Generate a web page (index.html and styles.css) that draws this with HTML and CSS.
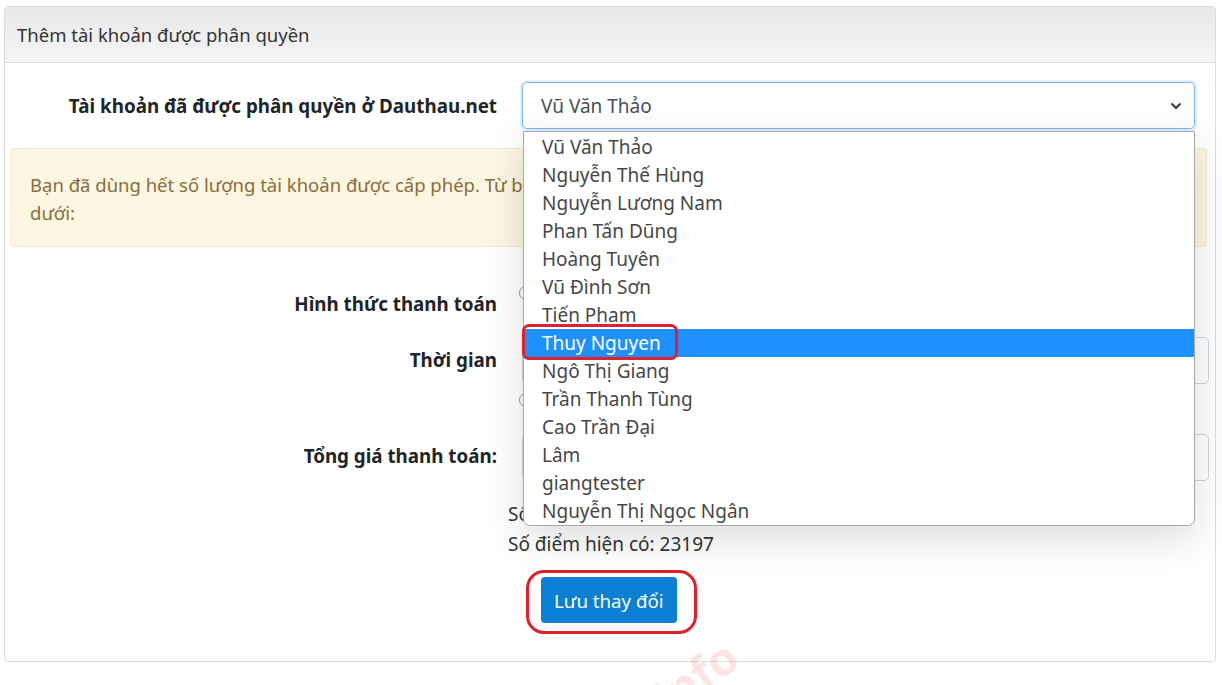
FILE: index.html
```html
<!DOCTYPE html>
<html lang="vi">
<head>
<meta charset="utf-8">
<title>Thêm tài khoản được phân quyền</title>
<link rel="stylesheet" href="styles.css">
</head>
<body>
<div class="card">
  <div class="card-header">Thêm tài khoản được phân quyền</div>
  <div class="card-body">
    <div class="row row-account">
      <div class="label">Tài khoản đã được phân quyền ở Dauthau.net</div>
      <div class="control">
        <div class="select-wrap">
          <div class="select">
            <span>Vũ Văn Thảo</span>
            <svg class="chev" width="12" height="8" viewBox="0 0 12 8"><path d="M1.5 1.5 L6 6 L10.5 1.5" fill="none" stroke="#343a40" stroke-width="2"/></svg>
          </div>
          <ul class="dropdown">
            <li>Vũ Văn Thảo</li>
            <li>Nguyễn Thế Hùng</li>
            <li>Nguyễn Lương Nam</li>
            <li>Phan Tấn Dũng</li>
            <li>Hoàng Tuyên</li>
            <li>Vũ Đình Sơn</li>
            <li>Tiến Pham</li>
            <li class="active"><span class="mark">Thuy Nguyen</span></li>
            <li>Ngô Thị Giang</li>
            <li>Trần Thanh Tùng</li>
            <li>Cao Trần Đại</li>
            <li>Lâm</li>
            <li>giangtester</li>
            <li>Nguyễn Thị Ngọc Ngân</li>
          </ul>
        </div>
      </div>
    </div>

    <div class="alert">Bạn đã dùng hết số lượng tài khoản được cấp phép. Từ bây giờ, để thêm tài khoản bạn cần thanh toán theo hình thức bên<br>dưới:</div>

    <div class="row row-pay">
      <div class="label">Hình thức thanh toán</div>
      <div class="control">
        <label class="radio"><span class="dot"></span>Thanh toán bằng điểm</label>
      </div>
    </div>

    <div class="row row-time">
      <div class="label">Thời gian</div>
      <div class="control">
        <div class="input">12 tháng</div>
        <label class="radio"><span class="dot"></span>Theo thời hạn gói VIP</label>
      </div>
    </div>

    <div class="row row-total">
      <div class="label">Tổng giá thanh toán:</div>
      <div class="control">
        <div class="input">0</div>
      </div>
    </div>

    <div class="info">
      <p>Số điểm cần thanh toán: 0</p>
      <p>Số điểm hiện có: 23197</p>
    </div>

    <div class="actions">
      <span class="btn-mark"><button class="btn">Lưu thay đổi</button></span>
    </div>
  </div>
</div>
<div class="watermark">info</div>
</body>
</html>
```

FILE: styles.css
```css
* { box-sizing: border-box; }
html, body { margin: 0; padding: 0; overflow: hidden; }
body {
  background: #fff;
  font-family: "Noto Sans", "Open Sans", sans-serif;
  color: #212529;
  padding: 6px 6px 0 4px;
  height: 685px;
  position: relative;
}
.card {
  border: 1px solid #dcdcdc;
  border-radius: 4px;
  background: #fff;
  height: 656px;
}
.card-header {
  height: 56px;
  padding: 0 12px;
  display: flex;
  align-items: center;
  font-size: 18.5px;
  color: #333;
  background: linear-gradient(#e8e8e8, #f5f5f5);
  border-bottom: 1px solid #dcdcdc;
  border-radius: 4px 4px 0 0;
}
.card-body { padding: 19px 8px 0 0; }
.row {
  display: grid;
  grid-template-columns: 505px 1fr;
  column-gap: 12px;
}
.label {
  font-weight: 700;
  font-size: 18.8px;
  text-align: right;
  padding-right: 13px;
  color: #212529;
}
.row-account { align-items: center; }
.select-wrap { position: relative; width: 673px; }
.select {
  height: 47px;
  border: 1px solid #80b5e6;
  border-radius: 5px;
  box-shadow: 0 0 0 2px rgba(0, 123, 255, 0.12);
  display: flex;
  align-items: center;
  justify-content: space-between;
  padding: 0 12px 0 18px;
  font-size: 19px;
  color: #495057;
}
.dropdown {
  position: absolute;
  top: 49px;
  left: 1px;
  right: 0;
  margin: 0;
  padding: 1px 0 0;
  list-style: none;
  background: #fff;
  border: 1px solid #a9a9a9;
  border-radius: 0 0 7px 7px;
  box-shadow: 0 12px 40px rgba(0, 0, 0, 0.14);
  z-index: 5;
}
.dropdown li {
  height: 28px;
  line-height: 28px;
  padding-left: 18px;
  font-size: 19px;
  color: #474747;
}
.dropdown li.active {
  background: #1e90ff;
  color: #fff;
}
.mark { position: relative; display: inline-block; }
.mark::after {
  content: "";
  position: absolute;
  left: -20px;
  right: -17px;
  top: -5px;
  bottom: -3px;
  border: 3px solid #e0202a;
  border-radius: 7px;
}
.alert {
  margin: 19px 0 0 5px;
  height: 99px;
  padding: 22px 19px 0;
  background: #fcf6e2;
  border: 1px solid #f5ebcb;
  border-radius: 4px;
  font-size: 18.5px;
  line-height: 28px;
  color: #8a6d3b;
}
.row-pay { margin-top: 44px; align-items: center; }
.radio {
  display: flex;
  align-items: center;
  gap: 8px;
  font-size: 18px;
  margin-left: -3px;
}
.dot {
  width: 14px;
  height: 14px;
  border: 1px solid #999;
  border-radius: 50%;
  display: inline-block;
}
.row-pay .radio { margin-top: -22px; }
.row-time { margin-top: 20px; }
.row-time .label { padding-top: 10px; }
.input {
  height: 47px;
  width: 687px;
  border: 1px solid #ced4da;
  border-radius: 5px;
  padding: 0 19px;
  display: flex;
  align-items: center;
  font-size: 18px;
  color: #495057;
}
.row-time .radio { margin-top: 4px; }
.row-total { margin-top: 22px; }
.row-total .label { padding-top: 9px; }
.info {
  margin: 18px 0 0 503px;
  font-size: 19px;
  line-height: 30px;
  color: #333;
}
.info p { margin: 0; }
.actions { margin: 11px 0 0 521px; }
.btn-mark {
  display: inline-block;
  padding: 4px 17px 8px 12px;
  border: 3px solid #e0202a;
  border-radius: 18px;
}
.btn {
  display: block;
  height: 46px;
  padding: 0 13px;
  background: #0a7fd4;
  color: #fff;
  border: none;
  border-radius: 4px;
  font-family: inherit;
  font-size: 18.7px;
}
.watermark {
  position: absolute;
  left: 650px;
  top: 645px;
  font-size: 46px;
  font-weight: 700;
  color: rgba(240, 40, 40, 0.12);
  transform: rotate(-35deg);
  pointer-events: none;
}
```
